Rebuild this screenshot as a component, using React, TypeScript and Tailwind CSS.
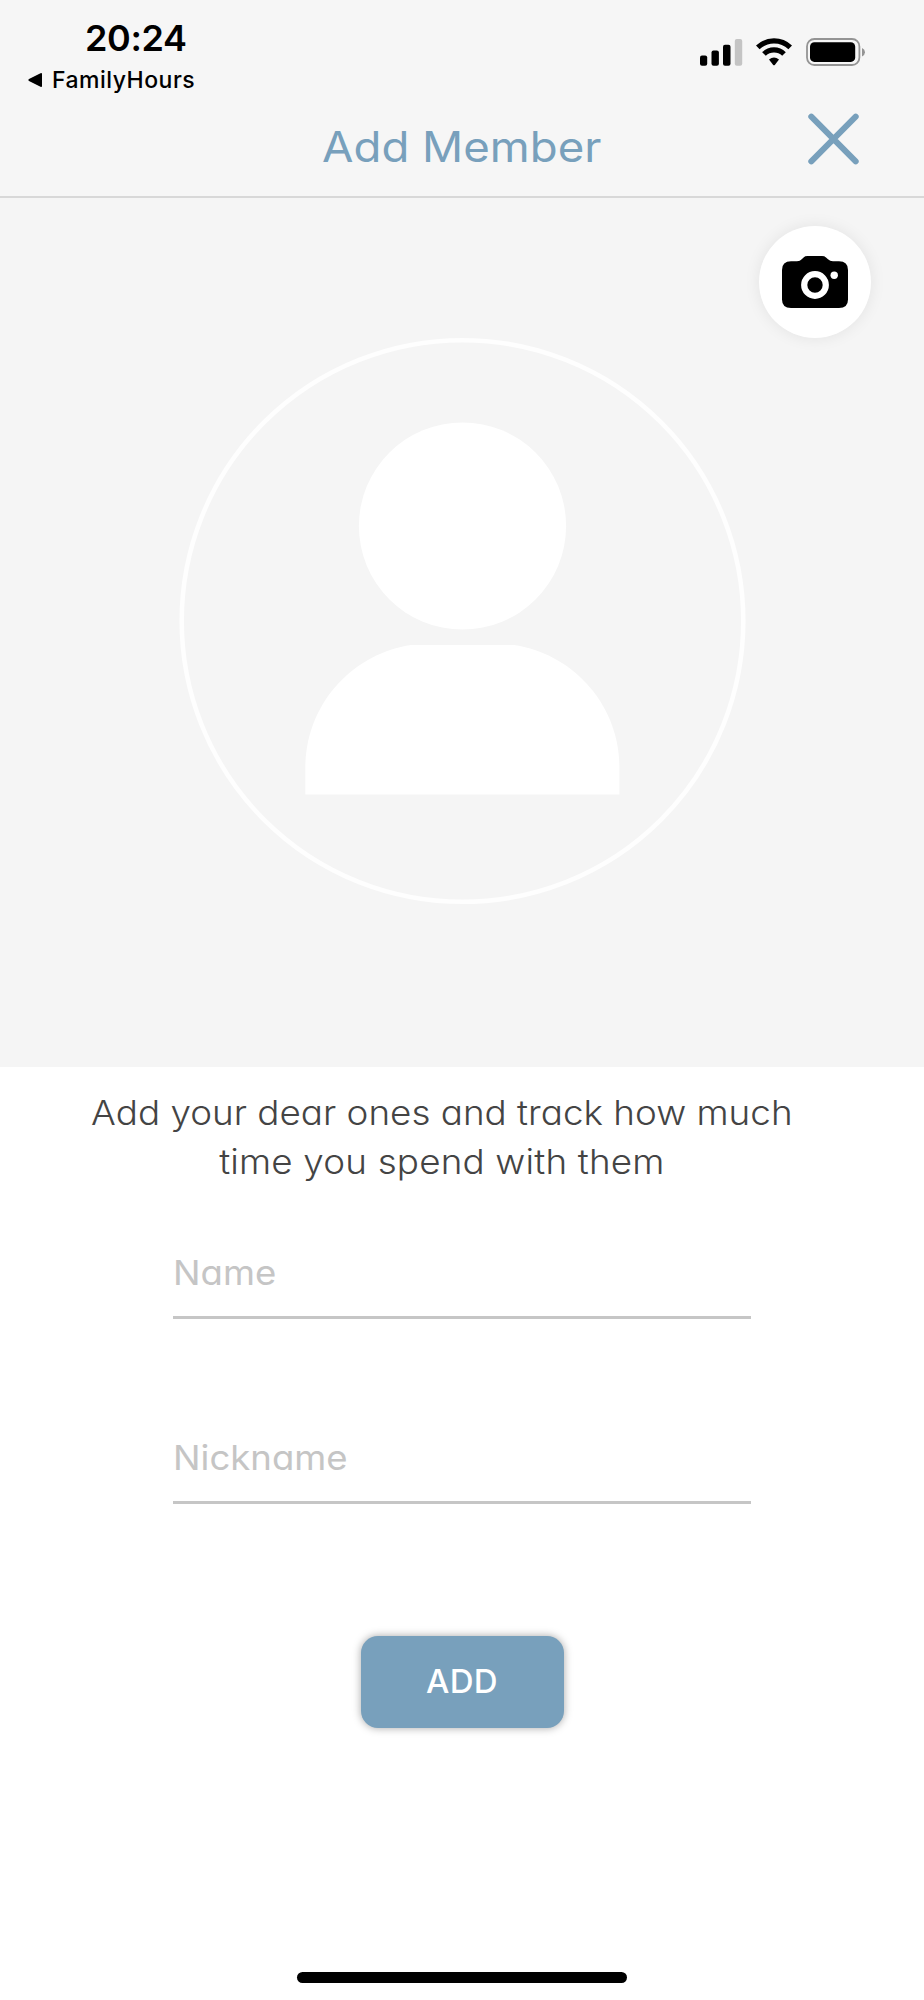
import React, { useState } from "react";

const StatusBar = () => {
  return (
    <div className="flex h-[100px] justify-between font-['Inter',sans-serif] text-black [font-feature-settings:normal]">
      <div className="flex flex-col pl-[27px] pt-[16px]">
        <span className="pl-[58px] text-[36px] font-semibold leading-[44px] tracking-[-0.4px] whitespace-nowrap">
          20:24
        </span>
        <span className="flex items-center gap-[9px] leading-[40px]">
          <svg width="16" height="16" viewBox="0 0 16 16">
            <path d="M2 7 L13.5 1.2 Q15 .6 15 2 V14 Q15 15.4 13.5 14.8 L2 9 Q.4 8 2 7Z" />
          </svg>
          <span className="text-[23px] font-medium tracking-[0.5px] whitespace-nowrap">
            FamilyHours
          </span>
        </span>
      </div>
      <div className="flex gap-[13px] pr-[57px] pt-[38px]">
        <svg width="43" height="28" viewBox="0 0 43 28">
          <rect x="0" y="17.5" width="7.2" height="10.2" rx="2" />
          <rect x="11.5" y="12.5" width="7.4" height="15.2" rx="2" />
          <rect x="23" y="6.8" width="7.5" height="20.9" rx="2" />
          <rect x="34.8" y="1" width="7.4" height="26.7" rx="2" fill="#c4c4c4" />
        </svg>
        <svg width="36" height="28" viewBox="0 0 36 28">
          <g fill="none" stroke="#000" strokeWidth="5.2">
            <path d="M1.8 9.4 A23.4 23.4 0 0 1 34.2 9.4" />
            <path d="M8 16 A14.4 14.4 0 0 1 28 16" />
          </g>
          <path d="M13 21.6 Q18 17.2 23 21.6 L18.8 26.9 Q18 27.7 17.2 26.9 Z" />
        </svg>
        <svg width="61" height="28" viewBox="0 0 61 28" className="ml-[1px]">
          <rect x="1" y="1" width="52.4" height="26" rx="7.4" fill="none" stroke="#949494" strokeWidth="1.8" />
          <rect x="4" y="4.3" width="45.2" height="19.6" rx="4.4" />
          <path d="M56 10 Q59 11.4 59 14.2 Q59 17 56 18.4Z" fill="#949494" />
        </svg>
      </div>
    </div>
  );
};

const Header = () => {
  return (
    <header className="h-[198px] border-b-2 border-[#d8d8d8] bg-[#f6f6f6]">
      <StatusBar />
      <div className="relative flex h-[96px] justify-center pt-[22px]">
        <h1 className="scale-x-[1.085] text-[42px] font-normal leading-[50px] text-[#78a0bc] whitespace-nowrap">
          Add Member
        </h1>
        <button className="absolute right-[64px] top-[12px]" aria-label="Close">
          <svg width="54" height="54" viewBox="0 0 54 54">
            <path
              d="M5.3 4.700 L49.700 49.300 M49.700 4.700 L5.300 49.300"
              stroke="#78a0bc"
              strokeWidth="6"
              strokeLinecap="round"
            />
          </svg>
        </button>
      </div>
    </header>
  );
};

const Photo = () => {
  return (
    <div className="relative h-[869px] bg-[#f5f5f5]">
      <svg width="924" height="869" viewBox="0 198 924 869" fill="#fff">
        <circle cx="462.5" cy="621" r="280.8" fill="none" stroke="#fff" strokeOpacity="0.85" strokeWidth="4.6" />
        <circle cx="462.5" cy="526" r="103.6" />
        <path d="M305.3 794.5 V768 C305.3 702 355 653 411 645 H514 C570 653 619.4 702 619.4 768 V794.5 Z" />
      </svg>
      <button
        aria-label="Take photo"
        className="absolute right-[53px] top-[28px] flex size-[112px] items-center justify-center rounded-full bg-white shadow-[0_0_16px_rgba(0,0,0,0.08)]"
      >
        <svg width="66" height="52" viewBox="0 0 66 52">
          <path d="M9 5.3 H15 Q18 5.3 20 3 L21.6 1.4 Q23 0 25.5 0 H40 Q42.5 0 44 1.4 L46 3.3 Q48 5.3 51 5.3 H57 Q66 5.3 66 14 V43.5 Q66 52 57 52 H9 Q0 52 0 43.5 V14 Q0 5.3 9 5.3Z" />
          <circle cx="33" cy="29" r="10.8" fill="none" stroke="#fff" strokeWidth="6.2" />
          <circle cx="52.2" cy="19.3" r="3.7" fill="#fff" />
        </svg>
      </button>
    </div>
  );
};

const Field = ({
  placeholder,
  value,
  setValue,
  className,
}: {
  placeholder: string;
  value: string;
  setValue: Function;
  className: string;
}) => {
  return (
    <div className={`h-[69px] w-[578px] border-b-[3px] border-[#c6c6c6] ${className}`}>
      <input
        className="h-[44px] w-[530px] origin-left scale-x-[1.075] bg-transparent text-[34px] outline-none placeholder:text-[#c5c5c5]"
        placeholder={placeholder}
        value={value}
        onChange={(e) => setValue(e.target.value)}
      />
    </div>
  );
};

export default function App() {
  const [name, setName] = useState<string>("");
  const [nickname, setNickname] = useState<string>("");

  return (
    <div className="flex h-[2000px] w-[924px] flex-col overflow-hidden bg-white font-['Inter',sans-serif] [font-feature-settings:'cv11']">
      <Header />
      <Photo />
      <div className="flex flex-1 flex-col items-center">
        <div className="mr-[41px] mt-[21px] scale-x-[1.083] text-center text-[34px] font-light leading-[49px] text-[#444] whitespace-nowrap">
          <p>Add your dear ones and track how much</p>
          <p className="tracking-[0.15px]">time you spend with them</p>
        </div>
        <Field placeholder="Name" value={name} setValue={setName} className="mt-[64px]" />
        <Field placeholder="Nickname" value={nickname} setValue={setNickname} className="mt-[116px]" />
        <button className="mt-[132px] h-[92px] w-[203px] rounded-[17px] bg-[#78a0bc] text-[33px] font-medium tracking-[0.3px] text-white shadow-[0_0_8px_rgba(0,0,0,0.35)]">
          ADD
        </button>
        <div className="mb-[17px] mt-auto h-[11px] w-[330px] rounded-full bg-black"></div>
      </div>
    </div>
  );
}
